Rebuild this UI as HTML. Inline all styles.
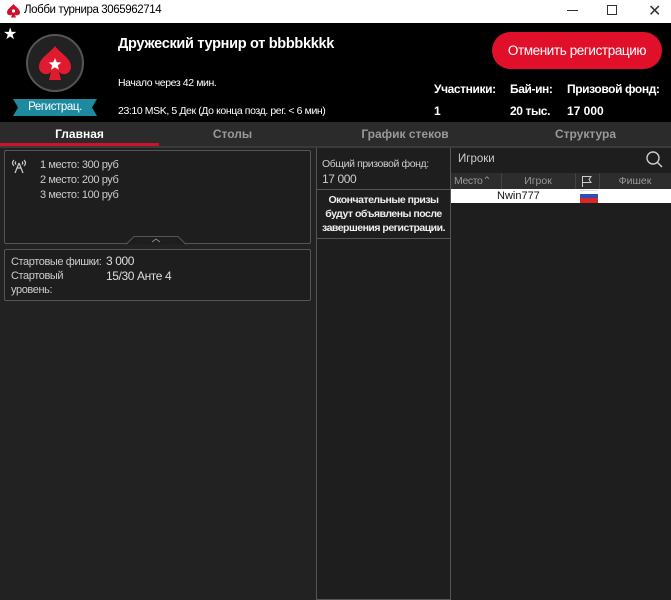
<!DOCTYPE html>
<html><head><meta charset="utf-8"><style>
*{margin:0;padding:0;box-sizing:border-box}
body{width:671px;height:600px;overflow:hidden;background:#222;font-family:"Liberation Sans",sans-serif;color:#ddd;position:relative;font-size:11px}
.a{position:absolute;white-space:nowrap}
.tb{left:0;top:0;width:671px;height:23px;background:#fff;color:#000;font-size:12px}
.hd{left:0;top:23px;width:671px;height:99px;background:#000;color:#fff}
.tabs{left:0;top:122px;width:671px;height:24px;background:#2b2b2b;font-weight:bold;font-size:12px;color:#999}
.box{border:1px solid #555;background:#1e1e1e;border-radius:2px}
.n{letter-spacing:-0.4px}
</style></head><body>
<div class="a tb">
<svg class="a" style="left:7px;top:4px" width="13" height="14" viewBox="0 0 13 14"><path d="M6.5 0C4 3 0 5 0 8.5a3 3 0 0 0 5 2L4 13.5h5L8 10.5a3 3 0 0 0 5-2C13 5 9 3 6.5 0z" fill="#d0112b"/><circle cx="6.5" cy="7" r="1.6" fill="#fff"/></svg>
<div class="a n" style="left:24px;top:4px;font-size:11.5px">Лобби турнира 3065962714</div>
<div class="a" style="left:567px;top:10px;width:11px;height:1px;background:#333"></div>
<div class="a" style="left:607px;top:5px;width:10px;height:10px;border:1px solid #333"></div>
<div class="a" style="left:648px;top:1px;font-size:16px;color:#333">✕</div>
</div>
<div class="a hd">
<div class="a" style="left:3px;top:1px;font-size:16px">★</div>
<div class="a" style="left:26px;top:11px;width:58px;height:58px;border-radius:50%;background:#222;border:2px solid #555"></div>
<svg class="a" style="left:39px;top:23px" width="32" height="36" viewBox="0 0 32 36"><path d="M16 0C10 8 0 12 0 21a7 7 0 0 0 12 5L10 34h12L20 26a7 7 0 0 0 12-5C32 12 22 8 16 0z" fill="#e11b2f"/><path d="M16 12l1.8 4.2 4.5.3-3.5 2.9 1.1 4.4L16 21.4l-3.9 2.4 1.1-4.4-3.5-2.9 4.5-.3z" fill="#fff"/></svg>
<svg class="a" style="left:13px;top:76px" width="84" height="17" viewBox="0 0 84 17"><path d="M0 0H84L79 8.5 84 17H0L5 8.5z" fill="#1e8aa0"/></svg>
<div class="a n" style="left:13px;top:78px;width:84px;text-align:center;font-size:11.5px">Регистрац.</div>
<div class="a" style="left:118px;top:13px;font-size:14.5px;font-weight:bold;letter-spacing:-0.3px">Дружеский турнир от bbbbkkkk</div>
<div class="a n" style="left:118px;top:54px;font-size:10.5px">Начало через 42 мин.</div>
<div class="a n" style="left:118px;top:82px;font-size:10.5px">23:10 MSK, 5 Дек (До конца позд. рег. &lt; 6 мин)</div>
<div class="a n" style="left:492px;top:9px;width:170px;height:37px;border-radius:19px;background:#e0102b;font-size:13.5px;line-height:37px;text-align:center">Отменить регистрацию</div>
<div class="a n" style="left:434px;top:59px;font-size:12px;font-weight:bold">Участники:</div>
<div class="a n" style="left:510px;top:59px;font-size:12px;font-weight:bold">Бай-ин:</div>
<div class="a n" style="left:567px;top:59px;font-size:12px;font-weight:bold">Призовой фонд:</div>
<div class="a" style="left:434px;top:81px;font-size:12px;font-weight:bold">1</div>
<div class="a n" style="left:510px;top:81px;font-size:12px;font-weight:bold">20 тыс.</div>
<div class="a" style="left:567px;top:81px;font-size:12px;font-weight:bold">17 000</div>
</div>
<div class="a tabs">
<div class="a" style="left:0;top:5px;width:159px;text-align:center;color:#fff">Главная</div>
<div class="a" style="left:0;top:21px;width:159px;height:3px;background:#d0112b"></div>
<div class="a" style="left:155px;top:5px;width:155px;text-align:center">Столы</div>
<div class="a" style="left:310px;top:5px;width:190px;text-align:center">График стеков</div>
<div class="a" style="left:500px;top:5px;width:171px;text-align:center">Структура</div>
</div>
<div class="a" style="left:0;top:146px;width:671px;height:2px;background:#3a3a3a"></div>
<div class="a box" style="left:4px;top:150px;width:307px;height:94px"></div>
<svg class="a" style="left:11px;top:158px" width="16" height="16" viewBox="0 0 16 16" fill="none" stroke="#ccc" stroke-width="1.2"><path d="M3 2Q0 5 3 8M5 3.5Q3.5 5 5 6.5M13 2Q16 5 13 8M11 3.5Q12.5 5 11 6.5"/><path d="M8 5L4 15M8 5L12 15M6 10H10"/></svg>
<div class="a n" style="left:40px;top:158px;line-height:15px;color:#ccc">1 место: 300 руб<br>2 место: 200 руб<br>3 место: 100 руб</div>
<svg class="a" style="left:126px;top:236px" width="60" height="9"><path d="M0 8.5L8 .5H52L60 8.5" fill="#1e1e1e" stroke="#555"/><path d="M26 6l4-3 4 3" fill="none" stroke="#888"/></svg>
<div class="a box" style="left:4px;top:249px;width:307px;height:52px"></div>
<div class="a n" style="left:11px;top:255px;color:#ccc;font-size:11px;line-height:14px">Стартовые фишки:<br>Стартовый<br>уровень:</div>
<div class="a n" style="left:106px;top:254px;color:#ddd;font-size:12px;line-height:15px">3 000<br>15/30 Анте 4</div>
<div class="a" style="left:316px;top:148px;width:135px;height:452px;border:1px solid #555;border-top:none;background:#1e1e1e"></div>
<div class="a n" style="left:322px;top:157px;font-size:10.5px;color:#ccc;line-height:15px">Общий призовой фонд:<br><span style="font-size:12px">17 000</span></div>
<div class="a" style="left:316px;top:189px;width:135px;height:1px;background:#555"></div>
<div class="a" style="left:316px;top:193px;width:135px;text-align:center;font-weight:bold;font-size:10.5px;line-height:14px;color:#eee;letter-spacing:-0.5px">Окончательные призы<br>будут объявлены после<br>завершения регистрации.</div>
<div class="a" style="left:316px;top:238px;width:135px;height:1px;background:#555"></div>
<div class="a" style="left:451px;top:148px;width:220px;height:452px;background:#1e1e1e"></div>
<div class="a" style="left:458px;top:153px;font-size:11.5px;color:#ccc">Игроки</div>
<svg class="a" style="left:645px;top:150px" width="18" height="18"><circle cx="8" cy="8" r="6" fill="none" stroke="#ccc" stroke-width="1.4"/><path d="M12.5 12.5L17 17" stroke="#ccc" stroke-width="1.4"/></svg>
<div class="a" style="left:451px;top:173px;width:220px;height:16px;background:#2d2d2d;color:#999;font-size:10.5px">
<div class="a n" style="left:3px;top:2px">Место⌃</div>
<div class="a" style="left:50px;top:0;width:1px;height:16px;background:#444"></div>
<div class="a" style="left:50px;top:2px;width:74px;text-align:center">Игрок</div>
<div class="a" style="left:124px;top:0;width:1px;height:16px;background:#444"></div>
<svg class="a" style="left:130px;top:2px" width="12" height="12" fill="none" stroke="#ccc"><path d="M1.5 12V1.5H10L8 4.5 10 7.5H1.5"/></svg>
<div class="a" style="left:148px;top:0;width:1px;height:16px;background:#444"></div>
<div class="a" style="left:148px;top:2px;width:72px;text-align:center">Фишек</div>
</div>
<div class="a" style="left:451px;top:189px;width:220px;height:14px;background:#fff;color:#111;font-size:11px">
<div class="a" style="left:46px;top:1px">Nwin777</div>
<div class="a" style="left:129px;top:1px;width:18px;height:4px;background:#fff;border-top:1px solid #ddd"></div>
<div class="a" style="left:129px;top:5px;width:18px;height:4px;background:#2f4fb5"></div>
<div class="a" style="left:129px;top:9px;width:18px;height:5px;background:#d9262b"></div>
</div>
</body></html>
